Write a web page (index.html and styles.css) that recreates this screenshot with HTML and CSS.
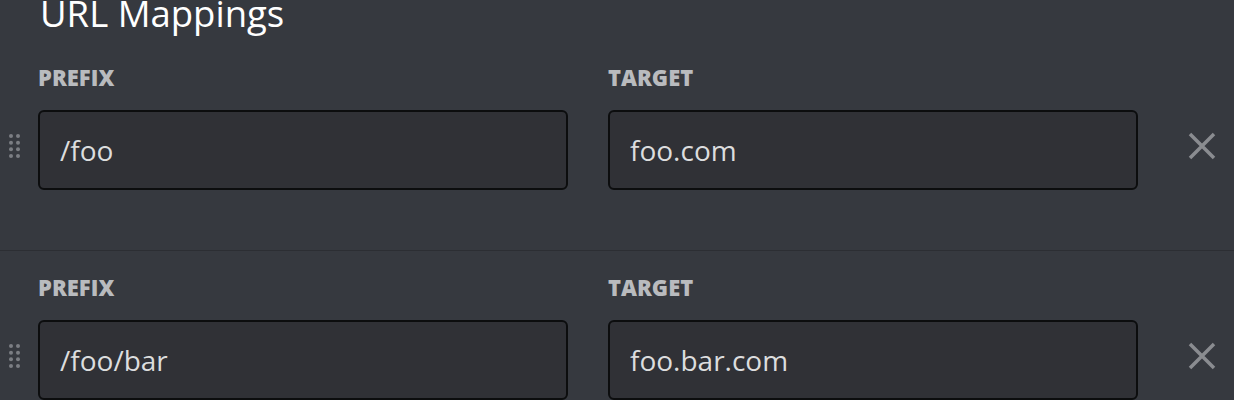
FILE: index.html
```html
<!DOCTYPE html>
<html lang="en">
<head>
    <meta charset="UTF-8">
    <meta name="viewport" content="width=device-width, initial-scale=1.0">
    <title>URL Mappings</title>
    <link rel="stylesheet" href="styles.css">
</head>
<body>
    <h1 class="title">URL Mappings</h1>

    <div class="mapping">
        <div class="handle">
            <svg width="11" height="24" viewBox="0 0 11 24">
                <circle cx="2" cy="2" r="2"/><circle cx="9" cy="2" r="2"/>
                <circle cx="2" cy="8.7" r="2"/><circle cx="9" cy="8.7" r="2"/>
                <circle cx="2" cy="15.3" r="2"/><circle cx="9" cy="15.3" r="2"/>
                <circle cx="2" cy="22" r="2"/><circle cx="9" cy="22" r="2"/>
            </svg>
        </div>
        <div class="field">
            <label class="label">Prefix</label>
            <input class="input" type="text" value="/foo">
        </div>
        <div class="field target">
            <label class="label">Target</label>
            <input class="input" type="text" value="foo.com">
        </div>
        <button class="remove">
            <svg width="28" height="28" viewBox="0 0 28 28">
                <path d="M2 2 L26 26 M26 2 L2 26"/>
            </svg>
        </button>
    </div>

    <div class="mapping">
        <div class="handle">
            <svg width="11" height="24" viewBox="0 0 11 24">
                <circle cx="2" cy="2" r="2"/><circle cx="9" cy="2" r="2"/>
                <circle cx="2" cy="8.7" r="2"/><circle cx="9" cy="8.7" r="2"/>
                <circle cx="2" cy="15.3" r="2"/><circle cx="9" cy="15.3" r="2"/>
                <circle cx="2" cy="22" r="2"/><circle cx="9" cy="22" r="2"/>
            </svg>
        </div>
        <div class="field">
            <label class="label">Prefix</label>
            <input class="input" type="text" value="/foo/bar">
        </div>
        <div class="field target">
            <label class="label">Target</label>
            <input class="input" type="text" value="foo.bar.com">
        </div>
        <button class="remove">
            <svg width="28" height="28" viewBox="0 0 28 28">
                <path d="M2 2 L26 26 M26 2 L2 26"/>
            </svg>
        </button>
    </div>
</body>
</html>
```

FILE: styles.css
```css
body{
    margin: 0;
    background-color: #36393f;
    font-family: 'Open Sans', 'Noto Sans', sans-serif;
    color: #dcddde;
    overflow: hidden;
}
.title{
    margin: -7px 0 8px 40px;
    font-size: 36.5px;
    line-height: 40px;
    font-weight: 400;
    color: #ffffff;
}
.mapping{
    display: flex;
    align-items: flex-end;
    padding: 24px 0 60px;
    border-bottom: 1px solid #2c2e33;
}
.field{
    display: flex;
    flex-direction: column;
    width: 530px;
}
.target{
    margin-left: 40px;
}
.label{
    font-size: 22px;
    line-height: 24px;
    font-weight: 800;
    text-transform: uppercase;
    color: #b9bbbe;
    margin-bottom: 21px;
}
.input{
    box-sizing: border-box;
    width: 530px;
    height: 80px;
    padding: 0 20px;
    border: 2px solid #0c0d0e;
    border-radius: 6px;
    background-color: #303136;
    color: #dcddde;
    font-family: 'Open Sans', 'Noto Sans', sans-serif;
    font-size: 28px;
    outline: none;
}
.handle{
    width: 38px;
    height: 80px;
    box-sizing: border-box;
    padding: 0 0 8px 9px;
    display: flex;
    align-items: center;
}
.handle svg{
    fill: #7b7e83;
}
.remove{
    margin-left: 50px;
    height: 80px;
    padding: 0 0 8px;
    border: none;
    background: none;
    display: flex;
    align-items: center;
}
.remove svg{
    stroke: #8a8c90;
    stroke-width: 3.5;
}
```
